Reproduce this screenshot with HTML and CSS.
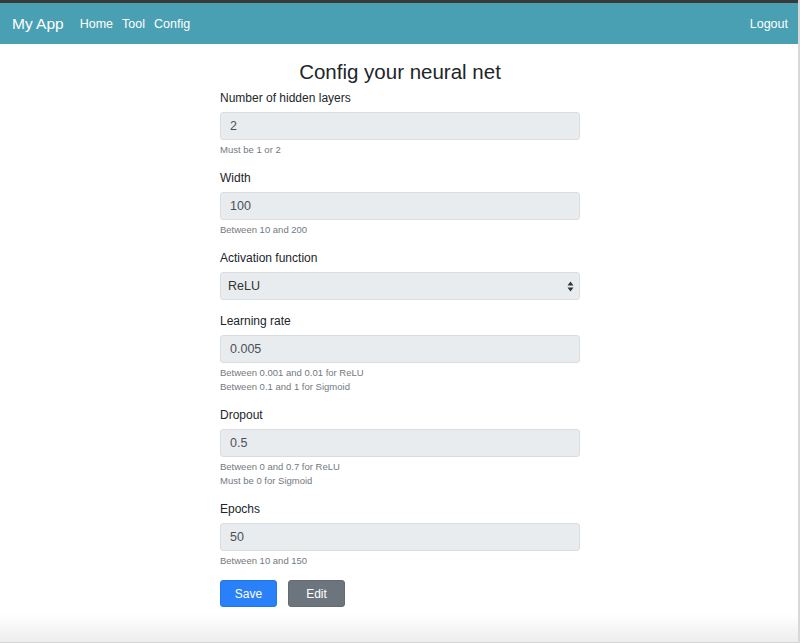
FILE: index.html
```html
<!DOCTYPE html>
<html>
<head>
<meta charset="utf-8">
<link rel="stylesheet" href="styles.css">
</head>
<body>
<div class="page">
  <div class="topbar"></div>
  <nav class="navbar">
    <div class="nav-left">
      <span class="brand">My App</span>
      <a class="nav-link">Home</a>
      <a class="nav-link">Tool</a>
      <a class="nav-link">Config</a>
    </div>
    <a class="nav-link">Logout</a>
  </nav>
  <main class="main">
    <form class="form">
      <h1 class="title">Config your neural net</h1>
      <div class="group">
        <label class="label">Number of hidden layers</label>
        <div class="input">2</div>
        <div class="help">Must be 1 or 2</div>
      </div>
      <div class="group">
        <label class="label">Width</label>
        <div class="input">100</div>
        <div class="help">Between 10 and 200</div>
      </div>
      <div class="group">
        <label class="label">Activation function</label>
        <div class="input select">
          <span>ReLU</span>
          <svg class="arrows" width="7" height="11" viewBox="0 0 7 11"><path d="M3.5 0.5 L6.5 4.5 H0.5 Z M3.5 10.5 L6.5 6.5 H0.5 Z" fill="#333"/></svg>
        </div>
      </div>
      <div class="group">
        <label class="label">Learning rate</label>
        <div class="input">0.005</div>
        <div class="help">Between 0.001 and 0.01 for ReLU</div>
        <div class="help">Between 0.1 and 1 for Sigmoid</div>
      </div>
      <div class="group">
        <label class="label">Dropout</label>
        <div class="input">0.5</div>
        <div class="help">Between 0 and 0.7 for ReLU</div>
        <div class="help">Must be 0 for Sigmoid</div>
      </div>
      <div class="group">
        <label class="label">Epochs</label>
        <div class="input">50</div>
        <div class="help">Between 10 and 150</div>
      </div>
      <div class="buttons">
        <button type="button" class="btn btn-primary">Save</button>
        <button type="button" class="btn btn-secondary">Edit</button>
      </div>
    </form>
  </main>
  <div class="shade"></div>
</div>
</body>
</html>
```

FILE: styles.css
```css
* { box-sizing: border-box; }
html, body { margin: 0; padding: 0; }
body {
  font-family: "Liberation Sans", Arial, sans-serif;
  color: #212529;
  background: #fff;
}
.page {
  min-height: 100vh;
  display: flex;
  flex-direction: column;
  border-right: 2px solid #d8d8d8;
}
.topbar {
  height: 3px;
  background: #38393b;
}
.navbar {
  height: 41px;
  background: #4aa0b3;
  display: flex;
  align-items: center;
  justify-content: space-between;
  padding: 0 10px 0 12px;
}
.nav-left {
  display: flex;
  align-items: center;
}
.brand {
  color: #fff;
  font-size: 15.5px;
  margin-right: 7px;
}
.nav-link {
  color: #fff;
  font-size: 12.5px;
  margin-left: 9px;
}
.main {
  flex: 1;
  display: flex;
  justify-content: center;
  padding-left: 2px;
}
.form {
  width: 360px;
}
.title {
  font-weight: normal;
  font-size: 20.5px;
  text-align: center;
  margin: 15px 0 4px 0;
  line-height: 26px;
}
.group {
  display: flex;
  flex-direction: column;
  margin-bottom: 12px;
}
.label {
  font-size: 12px;
  line-height: 19px;
  margin-bottom: 4px;
}
.input {
  height: 28px;
  flex: none;
  background: #e9ecef;
  border: 1px solid #dadde0;
  border-radius: 3px;
  padding: 0 9px;
  display: flex;
  align-items: center;
  font-size: 12.5px;
  color: #495057;
}
.select {
  justify-content: space-between;
  padding-right: 5px;
  padding-left: 7px;
  color: #333;
}
.help {
  font-size: 9.5px;
  line-height: 14px;
  color: #73797f;
}
.input + .help { margin-top: 3px; }
.buttons {
  display: flex;
  gap: 11px;
  margin-top: 0;
}
.btn {
  width: 57px;
  height: 27px;
  border-radius: 3px;
  color: #fff;
  font-family: "Liberation Sans", Arial, sans-serif;
  font-size: 12px;
  padding: 0;
}
.btn-primary {
  background: #2a80f9;
  border: 1px solid #2277ee;
}
.btn-secondary {
  background: #6c757d;
  border: 1px solid #646c73;
}
.shade {
  height: 30px;
  background: linear-gradient(to bottom, #ffffff 0%, #fafafa 30%, #ededed 95%, #c8c8c8 100%);
}
```
